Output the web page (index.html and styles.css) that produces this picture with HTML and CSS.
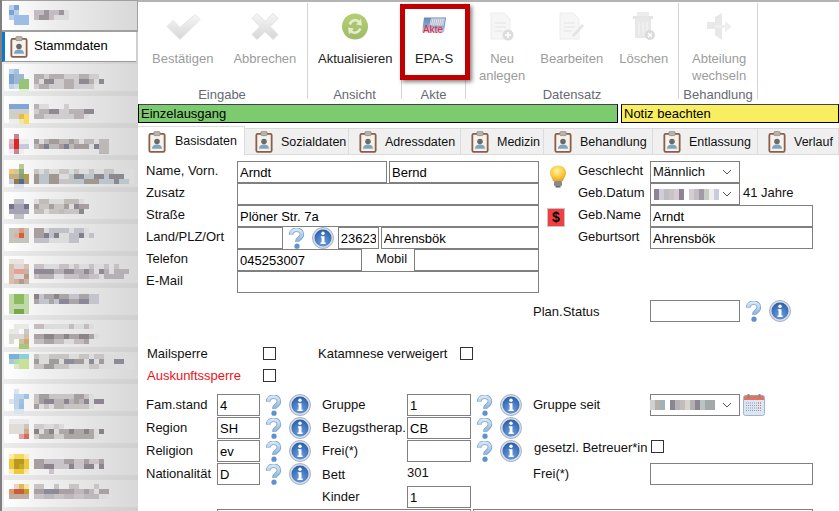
FILE: index.html
```html
<!DOCTYPE html>
<html lang="de">
<head>
<meta charset="utf-8">
<title>Stammdaten</title>
<link rel="stylesheet" href="styles.css">
</head>
<body>
<svg class="defs" width="0" height="0">
  <defs>
    <linearGradient id="qg" x1="0" y1="0" x2="0" y2="1"><stop offset="0" stop-color="#d6e6f5"/><stop offset="1" stop-color="#8db3dc"/></linearGradient>
    <radialGradient id="ig" cx=".5" cy=".75" r=".8"><stop offset="0" stop-color="#6d9fe0"/><stop offset="1" stop-color="#235aa6"/></radialGradient>
    <radialGradient id="bg" cx=".45" cy=".35" r=".7"><stop offset="0" stop-color="#fff3a8"/><stop offset=".6" stop-color="#fbc93c"/><stop offset="1" stop-color="#e99a1c"/></radialGradient>
    <linearGradient id="gray" x1="0" y1="0" x2="0" y2="1"><stop offset="0" stop-color="#f6f6f6"/><stop offset="1" stop-color="#d6d6d6"/></linearGradient>
    <linearGradient id="gr" x1="0" y1="0" x2="0" y2="1"><stop offset="0" stop-color="#b4cf72"/><stop offset="1" stop-color="#a0bb68"/></linearGradient>
    <linearGradient id="epa" x1="0" y1="0" x2="0" y2="1"><stop offset="0" stop-color="#6488bc"/><stop offset=".6" stop-color="#8aa6cc"/><stop offset="1" stop-color="#c8d4e6"/></linearGradient>
    <symbol id="clip" viewBox="0 0 20 24">
      <rect x="1.5" y="3.5" width="17" height="20" rx="1.5" fill="#f6f3ee" stroke="#8c5f48" stroke-width="2"/>
      <rect x="6.5" y="1" width="7" height="4.5" rx="1" fill="#b9b3aa" stroke="#8f8a82" stroke-width=".8"/>
      <circle cx="10" cy="12" r="3.1" fill="#6a6a66"/>
      <path d="M4.5 20c0-3.5 2.5-4.6 5.5-4.6s5.5 1.1 5.5 4.6z" fill="#7ea4c0"/>
    </symbol>
    <symbol id="q" viewBox="0 0 17 21">
      <path d="M3.2 6.8C3.2 3.2 5.8 1.8 8.6 1.8c3.1 0 5.3 1.900 5.300 4.500 0 2.400-1.700 3.500-3 4.500-1.100.9-1.700 1.500-1.700 3" fill="none" stroke="#7aa3d0" stroke-width="4.6"/>
      <path d="M3.2 6.8C3.2 3.2 5.8 1.8 8.6 1.8c3.1 0 5.3 1.900 5.300 4.500 0 2.400-1.700 3.500-3 4.500-1.100.9-1.700 1.500-1.700 3" fill="none" stroke="url(#qg)" stroke-width="3"/>
      <circle cx="9" cy="18.2" r="2.6" fill="#5f92cc"/>
    </symbol>
    <symbol id="i" viewBox="0 0 22 22">
      <circle cx="11" cy="11" r="10.5" fill="#d7dde6" stroke="#a9b2c0"/>
      <circle cx="11" cy="11" r="8.5" fill="url(#ig)"/>
      <circle cx="11" cy="6.3" r="1.7" fill="#fff"/>
      <path d="M8.8 9.2h3.700v6.400h1.200v1.400H8.500v-1.400h1.100v-5H8.800z" fill="#fff"/>
    </symbol>
  </defs>
</svg>
<div class="app">
  <aside class="side">
    <div class="nav nav-top">
      <svg class="mos" width="130" height="30"><g transform="translate(0,4) scale(5)" fill="none" shape-rendering="crispEdges">
        <path stroke="#dcdcdc" d="M6 1.5h7M6 2.500h7"/>
        <path stroke="#b9cfe8" d="M1 .5h1M2 1.500h1M1 2.500h1"/><path stroke="#7aa3d6" d="M2 .5h1M1 1.500h1"/><path stroke="#9cbde6" d="M2 2.500h3M2 3.500h3"/>
        <path stroke="#c4bcc0" d="M6 1.500h2m1 0h2M6 2.500h1m2 0h1"/><path stroke="#9a969a" d="M8 1.500h1M11 1.500h1M7 2.500h2"/>
      </g></svg>
    </div>
    <div class="nav nav-active">
      <svg class="clip-lg" width="18" height="23"><use href="#clip"/></svg>
      <span>Stammdaten</span>
    </div>
    <div class="nav">
      <svg class="mos" width="130" height="30"><g transform="translate(0,5) scale(5)" fill="none" shape-rendering="crispEdges">
        <path stroke="#dddcdc" d="M6 1.500h13M6 2.500h14M6 3.500h12"/>
        <path stroke="#bcd0e8" d="M1 .5h1M1 3.500h1"/><path stroke="#a0c0e8" d="M2 .5h1"/><path stroke="#80a4cc" d="M1 1.500h1M1 2.500h1"/><path stroke="#9cb8d4" d="M2 1.500h2M2 2.500h1"/><path stroke="#98c478" d="M3 2.500h2M3 3.500h2"/><path stroke="#e2eeda" d="M3 4.500h2"/><path stroke="#d0dce6" d="M2 3.500h1"/>
        <path stroke="#b4aeae" d="M6 1.500h2m1 0h3m3 0h2M6 2.500h1m5 0h2m3 0h1M7 3.500h2m3 0h2"/><path stroke="#8f8a92" d="M8 2.500h2m5 0h2m2 0h1"/><path stroke="#cfcdcd" d="M8 1.500h1m3 0h3m2 0h2M10 2.500h2m2 0h1M6 3.500h1m2 0h3m2 0h4"/>
      </g></svg>
    </div>
    <div class="nav">
      <svg class="mos" width="130" height="30"><g transform="translate(0,8) scale(5)" fill="none" shape-rendering="crispEdges">
        <path stroke="#dddcdc" d="M6 .5h3M6 1.500h11M6 2.500h11"/>
        <path stroke="#7ea6d8" d="M1 .5h4"/><path stroke="#cfcfca" d="M1 1.500h4M1 2.500h2"/><path stroke="#e3bc50" d="M3 2.500h1"/><path stroke="#fad864" d="M4 2.500h1M4 3.500h1"/><path stroke="#f4e6a8" d="M3 3.500h1"/><path stroke="#eeeeea" d="M1 3.500h2"/>
        <path stroke="#b8b2b4" d="M6 .5h1M7 1.500h2m4 0h3M6 2.500h2m6 0h2"/><path stroke="#8f8a92" d="M9 1.500h2m5 0h2"/><path stroke="#cfcdcd" d="M6 1.500h1m4 0h2M8 2.500h6M12 .5h1"/>
      </g></svg>
    </div>
    <div class="nav">
      <svg class="mos" width="130" height="30"><g transform="translate(0,6) scale(5)" fill="none" shape-rendering="crispEdges">
        <path stroke="#dddcdc" d="M6 1.500h15M6 2.500h15"/>
        <path stroke="#e2b8c0" d="M1 1.500h1"/><path stroke="#c88490" d="M2 .5h1M2 3.500h1"/><path stroke="#d8282c" d="M2 1.500h1M2 2.500h1"/><path stroke="#d8a8b4" d="M1 2.500h1"/><path stroke="#c8c8dc" d="M3 2.500h2"/><path stroke="#eeeeee" d="M3 1.500h2M1 3.500h1M3 3.500h1"/>
        <path stroke="#a49c9c" d="M6 1.500h1m2 0h2m2 0h1m2 0h1m2 0h1M7 2.500h1m3 0h1m2 0h3"/><path stroke="#80808c" d="M8 2.500h1m3 0h1m5 0h1"/><path stroke="#bdb8b8" d="M8 1.500h1m2 0h2m1 0h1m1 0h2m1 0h2M6 2.500h1m2 0h2m2 0h1m5 0h2M19 3.500h2"/>
      </g></svg>
    </div>
    <div class="nav">
      <svg class="mos" width="130" height="30"><g transform="translate(0,4) scale(5)" fill="none" shape-rendering="crispEdges">
        <path stroke="#dddcdc" d="M6 1.500h20M6 2.500h20M6 3.500h20"/>
        <path stroke="#b4cc94" d="M3 .5h1"/><path stroke="#f0c878" d="M1 1.500h1"/><path stroke="#d8c498" d="M2 1.500h1"/><path stroke="#8cb078" d="M3 1.500h1"/><path stroke="#c4b080" d="M1 2.500h2"/><path stroke="#b89c48" d="M4 2.500h1"/><path stroke="#8c9c78" d="M3 2.500h1"/><path stroke="#c4d0e0" d="M1 3.500h1"/><path stroke="#987848" d="M2 3.500h1"/><path stroke="#4c6c90" d="M3 3.500h1"/><path stroke="#b09870" d="M4 3.500h1"/><path stroke="#d8e0ec" d="M2 4.500h2"/>
        <path stroke="#c8c4c4" d="M6 1.500h1m1 0h1m2 0h2m1 0h1m2 0h1m2 0h2M11 3.500h3"/><path stroke="#a09890" d="M6 2.500h1m2 0h2M6 3.500h1m2 0h2m5 0h3"/><path stroke="#8c8890" d="M14 2.500h2m2 0h2m1 0h3M22 3.500h1"/><path stroke="#bcc4cc" d="M7 2.500h2m4 0h1m2 0h2m2 0h1M7 3.500h2m5 0h2m3 0h3M23 3.500h2"/>
      </g></svg>
    </div>
    <div class="nav">
      <svg class="mos" width="130" height="30"><g transform="translate(0,7) scale(5)" fill="none" shape-rendering="crispEdges">
        <path stroke="#dddcdc" d="M6 .5h10M6 1.500h11M6 2.500h10"/>
        <path stroke="#c0c0c8" d="M2 .5h2M2 3.500h2"/><path stroke="#74748c" d="M1 1.500h1M4 1.500h1"/><path stroke="#a4a4b4" d="M2 1.500h2M1 2.500h4"/>
        <path stroke="#c0bcb8" d="M7 .5h2m3 0h3M6 2.500h2m3 0h1"/><path stroke="#a8a0a0" d="M6 1.500h1m2 0h1m2 0h1m2 0h2"/><path stroke="#8c8890" d="M14 1.500h1M15 2.500h1"/><path stroke="#c8c4c4" d="M7 1.500h2m1 0h2M9 2.500h2m1 0h3"/>
      </g></svg>
    </div>
    <div class="nav">
      <svg class="mos" width="130" height="30"><g transform="translate(0,4) scale(5)" fill="none" shape-rendering="crispEdges">
        <path stroke="#dddcdc" d="M6 .5h11M6 1.500h11M6 2.500h9"/>
        <path stroke="#c4c4bc" d="M1 .5h4M1 1.500h1M4 1.500h1M1 2.500h4"/><path stroke="#d8b0a0" d="M2 1.500h1"/><path stroke="#d86038" d="M3 1.500h1"/><path stroke="#e09880" d="M3 .5h1"/>
        <path stroke="#a89ea0" d="M6 .5h2M6 1.500h2m5 0h1m3 0h1"/><path stroke="#80808a" d="M8 1.500h1m1 0h1M15 1.500h1"/><path stroke="#c0c0c8" d="M9 .5h4m1 0h2M9 1.500h1m3 0h2m2 0h1M13 2.500h2M6 2.500h3"/>
      </g></svg>
    </div>
    <div class="nav">
      <svg class="mos" width="130" height="30"><g transform="translate(0,3) scale(5)" fill="none" shape-rendering="crispEdges">
        <path stroke="#dddcdc" d="M6 1.500h14M6 2.500h19M6 3.500h19"/>
        <path stroke="#e8e4e0" d="M1 .5h3"/><path stroke="#d8c0b0" d="M1 1.500h1M4 1.500h1M1 2.500h1M1 3.500h1M1 4.500h1"/><path stroke="#e4a090" d="M2 2.500h2"/><path stroke="#b89888" d="M4 3.500h1M3 4.500h1"/><path stroke="#e0d8d4" d="M2 3.500h2M2 1.500h2"/><path stroke="#c8b4a4" d="M2 4.500h1M4 2.500h1M4 4.500h1"/>
        <path stroke="#c8c0c4" d="M6 1.500h2m3 0h2m1 0h1m2 0h1m2 0h1m1 0h1M6 3.500h1m5 0h3m2 0h2"/><path stroke="#908a94" d="M6 2.500h4m2 0h2m2 0h1m2 0h2m1 0h1"/><path stroke="#b4b0b4" d="M10 2.500h2m2 0h2m1 0h1m2 0h1m1 0h3M7 3.500h3m5 0h2m3 0h4"/>
      </g></svg>
    </div>
    <div class="nav">
      <svg class="mos" width="130" height="30"><g transform="translate(0,6) scale(5)" fill="none" shape-rendering="crispEdges">
        <path stroke="#dddcdc" d="M6 .5h11M6 1.500h11"/>
        <path stroke="#c0d8a8" d="M1 .5h1M4 .5h1M1 1.500h1M4 1.500h1M1 2.500h4M1 3.500h1M4 3.500h1"/><path stroke="#8cbc60" d="M2 .5h2M2 1.500h2"/><path stroke="#78a848" d="M2 3.500h2"/>
        <path stroke="#8c8484" d="M6 .5h1m3 0h1"/><path stroke="#a8a4a8" d="M8 .5h2m1 0h2m2 0h2M6 1.500h1m2 0h1m3 0h2m2 0h1"/><path stroke="#8a8898" d="M11 1.500h2M15 1.500h2"/><path stroke="#c4c4cc" d="M7 .5h1m5 0h2m2 0h2M7 1.500h2m1 0h1m6 0h2"/>
      </g></svg>
    </div>
    <div class="nav">
      <svg class="mos" width="130" height="30"><g transform="translate(0,4) scale(5)" fill="none" shape-rendering="crispEdges">
        <path stroke="#dddcdc" d="M6 .5h12M6 2.500h13M6 3.500h11"/>
        <path stroke="#e8e8e4" d="M2 .5h3M1 1.500h2"/><path stroke="#c8c8c4" d="M4 1.500h1"/><path stroke="#dcdad6" d="M1 2.500h3M1 3.500h1"/><path stroke="#d0c0a8" d="M3 3.500h2M4 2.500h1"/><path stroke="#cfa878" d="M4 3.500h1"/><path stroke="#a8c878" d="M3 4.500h2"/>
        <path stroke="#c4bcc0" d="M6 .5h2M13 .5h1M16 .5h1M6 3.500h2m2 0h2m2 0h2"/><path stroke="#8c8488" d="M8 2.500h2m2 0h1m2 0h2"/><path stroke="#a8a4a4" d="M6 2.500h2m2 0h2m1 0h2m2 0h1M8 3.500h2m6 0h1"/>
      </g></svg>
    </div>
    <div class="nav">
      <svg class="mos" width="130" height="30"><g transform="translate(0,2) scale(5)" fill="none" shape-rendering="crispEdges">
        <path stroke="#dddcdc" d="M6 .5h19M6 1.500h20M6 2.500h20"/>
        <path stroke="#7cb0dc" d="M1 .5h2"/><path stroke="#8cd0e0" d="M3 .5h2"/><path stroke="#a8c8d8" d="M1 1.500h1"/><path stroke="#b0dca8" d="M2 1.500h1"/><path stroke="#c8e098" d="M3 1.500h2M3 2.500h2"/><path stroke="#d8e8c8" d="M2 2.500h1"/>
        <path stroke="#c8c4c4" d="M6 .5h1m2 0h4m2 0h2m1 0h2M6 2.500h2m2 0h3m4 0h2"/><path stroke="#a09c9c" d="M6 1.500h1m2 0h2m3 0h2m3 0h1m2 0h2M8 2.500h2"/><path stroke="#8c8c98" d="M12 1.500h2m3 0h1m4 0h2"/>
      </g></svg>
    </div>
    <div class="nav">
      <svg class="mos" width="130" height="30"><g transform="translate(0,5) scale(5)" fill="none" shape-rendering="crispEdges">
        <path stroke="#dddcdc" d="M6 1.500h12M6 2.500h14M6 3.500h12"/>
        <path stroke="#d8e4f0" d="M2 .5h1M1 2.500h1M2 4.500h2"/><path stroke="#bcd4ec" d="M2 1.500h2M2 2.500h1"/><path stroke="#a0c0e4" d="M4 1.500h1M3 2.500h1"/><path stroke="#c0d4e8" d="M2 3.500h1"/><path stroke="#9cbce0" d="M3 3.500h1"/>
        <path stroke="#c8c4c4" d="M6 1.500h1m2 0h5m2 0h1M6 2.500h1M8 3.500h1m3 0h5"/><path stroke="#a49ea0" d="M7 1.500h2m5 0h2M14 2.500h1M7 2.500h1M6 3.500h1"/><path stroke="#8c8490" d="M8 2.500h2m2 0h1m3 0h1m1 0h2"/><path stroke="#b8b4b4" d="M10 2.500h2m1 0h1m1 0h1M10 3.500h2"/>
      </g></svg>
    </div>
    <div class="nav">
      <svg class="mos" width="130" height="30"><g transform="translate(0,3) scale(5)" fill="none" shape-rendering="crispEdges">
        <path stroke="#dddcdc" d="M6 1.500h6M6 2.500h14M6 3.500h13"/>
        <path stroke="#eceae8" d="M1 .5h4"/><path stroke="#e0dcd8" d="M1 1.500h3M1 2.500h3"/><path stroke="#c8c4c0" d="M4 1.500h1"/><path stroke="#ceaa88" d="M4 2.500h1"/><path stroke="#e0a0a0" d="M3 3.500h1"/><path stroke="#d86860" d="M4 3.500h1"/>
        <path stroke="#cfcccc" d="M6 1.500h2m2 0h1M6 3.500h1m3 0h2"/><path stroke="#8c8484" d="M6 2.500h1m2 0h1m3 0h1m2 0h1m2 0h1"/><path stroke="#aca8a8" d="M8 2.500h1m2 0h2m1 0h2m1 0h1M7 3.500h3M12 3.500h6"/>
      </g></svg>
    </div>
    <div class="nav">
      <svg class="mos" width="130" height="30"><g transform="translate(0,6) scale(5)" fill="none" shape-rendering="crispEdges">
        <path stroke="#dddcdc" d="M6 1.500h14M6 2.500h14"/>
        <path stroke="#faeca8" d="M1 .5h1M4 .5h1M1 3.500h1M4 3.500h1"/><path stroke="#f4d860" d="M2 .5h2"/><path stroke="#ecc83c" d="M1 1.500h1M4 1.500h1M1 2.500h1M4 2.500h1M2 3.500h2"/><path stroke="#b89820" d="M2 1.500h2M2 2.500h1"/><path stroke="#c8a828" d="M3 2.500h1"/>
        <path stroke="#a8a0a0" d="M6 1.500h2m4 0h2m2 0h1m2 0h1M6 2.500h2"/><path stroke="#8c848c" d="M8 2.500h2m3 0h1m2 0h2m1 0h1"/><path stroke="#c8c4c8" d="M8 1.500h4m2 0h2m1 0h2M10 2.500h3m1 0h2M9 3.500h1"/>
      </g></svg>
    </div>
    <div class="nav">
      <svg class="mos" width="130" height="30"><g transform="translate(0,4) scale(5)" fill="none" shape-rendering="crispEdges">
        <path stroke="#dddcdc" d="M6 1.500h15M6 2.500h15"/>
        <path stroke="#f0d0c0" d="M2 .5h1"/><path stroke="#e0b860" d="M3 .5h1"/><path stroke="#f4e8a0" d="M4 .5h1"/><path stroke="#e09868" d="M1 1.500h1"/><path stroke="#c0603c" d="M2 1.500h2"/><path stroke="#c89c20" d="M4 1.500h1"/><path stroke="#c0aca4" d="M1 2.500h4"/>
        <path stroke="#c8c4c4" d="M6 .5h2m2 0h1m2 0h2m3 0h1M6 2.500h2m2 0h2m2 0h2"/><path stroke="#8c8c98" d="M8 1.500h3"/><path stroke="#a8a0a4" d="M6 1.500h2m3 0h3m2 0h1m2 0h2"/><path stroke="#bcb8bc" d="M14 1.500h2m1 0h1M8 2.500h2m2 0h2m2 0h3"/>
      </g></svg>
    </div>
  </aside>

  <main class="main">
    <div class="ribbon">
      <section class="group g-eingabe">
        <div class="btns">
          <div class="btn off">
            <svg class="ic" width="36" height="30" viewBox="0 0 36 30"><path d="M2 15l6-6 7 7L30 3l5 5-20 20z" fill="url(#gray)" stroke="#e4e4e4"/></svg>
            <span>Bestätigen</span>
          </div>
          <div class="btn off">
            <svg class="ic" width="30" height="30" viewBox="0 0 30 30"><path d="M7 2l8 8 8-8 5 5-8 8 8 8-5 5-8-8-8 8-5-5 8-8-8-8z" fill="url(#gray)" stroke="#e0e0e0"/></svg>
            <span>Abbrechen</span>
          </div>
        </div>
        <h2>Eingabe</h2>
      </section>
      <section class="group g-ansicht">
        <div class="btns">
          <div class="btn">
            <svg class="ic" width="28" height="28" viewBox="0 0 28 28"><circle cx="14" cy="14" r="13" fill="url(#gr)"/><path d="M20 6l1 7-6-1 2-2c-3-2-6-.5-7 2.500l-2.500-1C9 7 14 5 18.500 8zM8 22l-1-7 6 1-2 2c3 2 6 .5 7-2.500l2.500 1C19 21 14 23 9.500 20z" fill="#e4edcf"/></svg>
            <span>Aktualisieren</span>
          </div>
        </div>
        <h2>Ansicht</h2>
      </section>
      <section class="group g-akte">
        <div class="btns">
          <div class="btn">
            <svg class="ic" width="24" height="18" viewBox="0 0 24 18"><path d="M2 0h22l-2 15H0z" fill="url(#epa)"/><path d="M9 1h14l-1.500 7H7.500z" fill="#e4e8ef"/><path d="M10 1L8.500 8M12 1l-1.500 7M14 1l-1.500 7M16 1l-1.500 7M18 1l-1.500 7M20 1l-1.500 7M22 1l-1.500 7" stroke="#a4aebe" stroke-width=".8"/><text class="akte" x="1" y="15">Akte</text></svg>
            <span>EPA-S</span>
          </div>
        </div>
        <h2>Akte</h2>
        <div class="mark"></div>
      </section>
      <section class="group g-daten">
        <div class="btns">
          <div class="btn off">
            <svg class="ic" width="24" height="29" viewBox="0 0 24 29"><path d="M1 1h13l6 6v20H1z" fill="#f6f6f6" stroke="#ececec"/><path d="M5 11h11M5 15h11M5 19h8" stroke="#e4e4e4"/><circle cx="18" cy="23" r="5.5" fill="#dcdcdc"/><path d="M18 20v6M15 23h6" stroke="#fff" stroke-width="1.5"/></svg>
            <span>Neu<br>anlegen</span>
          </div>
          <div class="btn off">
            <svg class="ic" width="26" height="29" viewBox="0 0 26 29"><path d="M1 1h13l6 6v20H1z" fill="#f6f6f6" stroke="#ececec"/><path d="M5 11h11M5 15h11M5 19h8" stroke="#e4e4e4"/><path d="M23 12l2 2-9 10-3 1 1-3z" fill="#e4e4e4"/></svg>
            <span>Bearbeiten</span>
          </div>
          <div class="btn off">
            <svg class="ic" width="24" height="29" viewBox="0 0 24 29"><rect x="5" y="0" width="12" height="4" fill="#ececec"/><rect x="1" y="4" width="20" height="3" fill="#e6e6e6"/><path d="M3 7h16v19H3z" fill="#e8e8e8"/><path d="M7 10v13M11 10v13M15 10v13" stroke="#f6f6f6"/><circle cx="18" cy="23" r="5" fill="#dadada"/><path d="M16 21l4 4m0-4l-4 4" stroke="#fff" stroke-width="1.3"/></svg>
            <span>Löschen</span>
          </div>
        </div>
        <h2>Datensatz</h2>
      </section>
      <section class="group g-abt">
        <div class="btns">
          <div class="btn off">
            <svg class="ic" width="28" height="29" viewBox="0 0 28 29"><path d="M2 10h8V5l7-4v27l-7-5v-6H2z" fill="#e8e8e8"/><path d="M10 13h10V9l7 5.500-7 5.500v-4H10z" fill="#efefef"/></svg>
            <span>Abteilung<br>wechseln</span>
          </div>
        </div>
        <h2>Behandlung</h2>
      </section>
    </div>

    <div class="status">
      <div class="st st-green">Einzelausgang</div>
      <div class="st st-yellow">Notiz beachten</div>
    </div>

    <div class="tabs">
      <div class="tab active t1"><svg width="18" height="23"><use href="#clip"/></svg><span>Basisdaten</span></div>
      <div class="tab t2"><svg width="18" height="23"><use href="#clip"/></svg><span>Sozialdaten</span></div>
      <div class="tab t3"><svg width="18" height="23"><use href="#clip"/></svg><span>Adressdaten</span></div>
      <div class="tab t4"><svg width="18" height="23"><use href="#clip"/></svg><span>Medizin</span></div>
      <div class="tab t5"><svg width="18" height="23"><use href="#clip"/></svg><span>Behandlung</span></div>
      <div class="tab t6"><svg width="18" height="23"><use href="#clip"/></svg><span>Entlassung</span></div>
      <div class="tab t7"><svg width="18" height="23"><use href="#clip"/></svg><span>Verlauf</span></div>
    </div>

    <form class="form">
      <div class="top">
        <div class="left">
          <div class="row"><label>Name, Vorn.</label><input class="w150" value="Arndt"><input class="w150" value="Bernd"></div>
          <div class="row"><label>Zusatz</label><input class="w302"></div>
          <div class="row"><label>Straße</label><input class="w302" value="Plöner Str. 7a"></div>
          <div class="row"><label>Land/PLZ/Ort</label><input class="w46"><svg class="q" width="17" height="21"><use href="#q"/></svg><svg class="i" width="22" height="22"><use href="#i"/></svg><input class="w41" value="23623"><input class="w159" value="Ahrensbök"></div>
          <div class="row"><label>Telefon</label><input class="w125" value="045253007"><span class="mobil">Mobil</span><input class="w125" value=""></div>
          <div class="row"><label>E-Mail</label><input class="w302"></div>
        </div>
        <div class="mid">
          <svg class="bulb" width="18" height="23" viewBox="0 0 18 23"><path d="M9 .5c4.500 0 8 3.200 8 7.300 0 3.300-2.300 4.800-3 8.200H4C3.300 12.600 1 11.100 1 7.800 1 3.700 4.500.5 9 .5z" fill="url(#bg)"/><rect x="5" y="16" width="8" height="5" rx="1" fill="#8a8a8a"/><rect x="6.500" y="21" width="5" height="1.500" fill="#666"/></svg>
          <div class="dollar">$</div>
        </div>
        <div class="right">
          <div class="row"><label class="rl">Geschlecht</label><div class="sel"><span>Männlich</span><svg width="10" height="6" viewBox="0 0 10 6"><path d="M1 1l4 4 4-4" fill="none" stroke="#555"/></svg></div></div>
          <div class="row"><label class="rl">Geb.Datum</label><div class="sel">
            <svg class="blur" width="65" height="11"><g transform="scale(5,5.5)" fill="none" stroke-width="2" shape-rendering="crispEdges"><path stroke="#8f8494" d="M0 1h1M5 1h1"/><path stroke="#cfcfdc" d="M1 1h1"/><path stroke="#c0bcc0" d="M2 1h1"/><path stroke="#c8c4c4" d="M3 1h1"/><path stroke="#d4ccd0" d="M4 1h1M7 1h1"/><path stroke="#c4bcc4" d="M8 1h1"/><path stroke="#a09aa4" d="M9 1h1"/><path stroke="#c8ccc8" d="M10 1h1"/><path stroke="#f0f0e8" d="M11 1h1"/><path stroke="#c8cce0" d="M12 1h1"/></g></svg>
            <svg width="10" height="6" viewBox="0 0 10 6"><path d="M1 1l4 4 4-4" fill="none" stroke="#555"/></svg></div><span class="age">41 Jahre</span></div>
          <div class="row"><label class="rl">Geb.Name</label><input class="w163" value="Arndt"></div>
          <div class="row"><label class="rl">Geburtsort</label><input class="w163" value="Ahrensbök"></div>
        </div>
      </div>

      <div class="plan">
        <label>Plan.Status</label><input class="w90"><svg class="q" width="17" height="21"><use href="#q"/></svg><svg class="i" width="22" height="22"><use href="#i"/></svg>
      </div>

      <div class="flags">
        <div class="flag"><label>Mailsperre</label><span class="cb"></span><label class="kat">Katamnese verweigert</label><span class="cb"></span></div>
        <div class="flag"><label class="red">Auskunftssperre</label><span class="cb"></span></div>
      </div>

      <div class="grid">
        <label>Fam.stand</label><input value="4"><svg class="q" width="17" height="21"><use href="#q"/></svg><svg width="22" height="22"><use href="#i"/></svg>
        <label>Gruppe</label><input value="1"><svg class="q" width="17" height="21"><use href="#q"/></svg><svg width="22" height="22"><use href="#i"/></svg>
        <label>Gruppe seit</label>
        <div class="datewrap"><div class="sel">
          <svg class="blur" width="70" height="10"><g transform="scale(5)" fill="none" stroke-width="2" shape-rendering="crispEdges"><path stroke="#d0d0d0" d="M0 1h1"/><path stroke="#b8b0ac" d="M1 1h1"/><path stroke="#a4b0b8" d="M2 1h1"/><path stroke="#8c8490" d="M4 1h1M9 1h1"/><path stroke="#b4b4b8" d="M5 1h1"/><path stroke="#c4bcb8" d="M6 1h1"/><path stroke="#d8d4d0" d="M7 1h1"/><path stroke="#b4b0b0" d="M8 1h1"/><path stroke="#b8c4c0" d="M10 1h1"/><path stroke="#a4a8a8" d="M11 1h2"/></g></svg>
          <svg width="10" height="6" viewBox="0 0 10 6"><path d="M1 1l4 4 4-4" fill="none" stroke="#555"/></svg></div>
          <svg class="cal" width="22" height="22" viewBox="0 0 22 22"><rect x=".5" y="1.500" width="21" height="20" rx="2" fill="#dce6f2" stroke="#9fb4cf"/><path d="M1 3.500a2 2 0 0 1 2-2h16a2 2 0 0 1 2 2V6H1z" fill="#df7462"/><rect x="4.500" y="0" width="2" height="4" fill="#8a8a8a"/><rect x="15.500" y="0" width="2" height="4" fill="#8a8a8a"/><path d="M3 9h16M3 11.500h16M3 14h16M3 16.500h16" stroke="#8f9cb8" stroke-dasharray="1 1"/><path d="M15 9h4M15 11.500h4M15 14h4" stroke="#e0685c" stroke-dasharray="1 1"/></svg>
        </div>

        <label>Region</label><input value="SH"><svg class="q" width="17" height="21"><use href="#q"/></svg><svg width="22" height="22"><use href="#i"/></svg>
        <label>Bezugstherap.</label><input value="CB"><svg class="q" width="17" height="21"><use href="#q"/></svg><svg width="22" height="22"><use href="#i"/></svg>
        <span></span><span></span>

        <label>Religion</label><input value="ev"><svg class="q" width="17" height="21"><use href="#q"/></svg><svg width="22" height="22"><use href="#i"/></svg>
        <label>Frei(*)</label><input><svg class="q" width="17" height="21"><use href="#q"/></svg><svg width="22" height="22"><use href="#i"/></svg>
        <label class="gesetzl">gesetzl. Betreuer*in</label><span class="cb cb-g"></span>

        <label>Nationalität</label><input value="D"><svg class="q" width="17" height="21"><use href="#q"/></svg><svg width="22" height="22"><use href="#i"/></svg>
        <label class="low">Bett</label><span class="val">301</span><span></span><span></span>
        <label>Frei(*)</label><input>

        <span></span><span></span><span></span><span></span>
        <label>Kinder</label><input value="1">
      </div>
      <div class="last"><input class="lw1"><input class="lw2"></div>
    </form>
  </main>
</div>
</body>
</html>
```
FILE: styles.css
```css
html, body { margin: 0; padding: 0; }
body { width: 839px; height: 511px; overflow: hidden; background: #fff; font: 13px/16px "Liberation Sans", Arial, sans-serif; color: #111; }
.defs { position: absolute; }
.app { display: flex; height: 511px; overflow: hidden; }

/* sidebar */
.side { width: 136px; flex: none; border-left: 2px solid #808080; background: linear-gradient(90deg, #ececec, #dcdcdc 50%, #cfcfcf); height: 511px; overflow: hidden; }
.nav { height: 27px; margin: 0 0 5px 2px; background: linear-gradient(90deg, #fff, #f0f0f0 30%, #d8d8d8); }
.mos { display: block; overflow: visible; }
.nav-top { box-sizing: content-box; height: 29px; margin: 0 0 0 -1px; border: 1px solid #a0a0a0; border-bottom-width: 2px; }
.nav-top .mos { margin-left: 2px; }
.nav-active { box-sizing: content-box; width: 126px; height: 28px; margin: 0 0 2px; padding: 0 0 1px 5px; background: #fff; display: flex; align-items: center; gap: 6px; border-left: 3px solid #0a78d2; border-bottom: 1px solid #999; color: #000; }
.clip-lg { flex: none; }

/* ribbon */
.main { flex: 1; min-width: 0; }
.ribbon { display: flex; height: 101px; padding-top: 1px; border-top: 2px solid #b4b4b4; }
.group { position: relative; box-sizing: border-box; height: 96px; border-right: 1px solid #d4d4d4; text-align: center; flex: none; }
.group h2 { margin: 0; font: inherit; color: #666a72; line-height: 16px; }
.btns { display: flex; height: 84px; }
.btn { display: flex; flex-direction: column; align-items: center; color: #222; }
.btn .ic { height: 47px; flex: none; }
.btn span { white-space: nowrap; line-height: 17px; }
.btn.off span { color: #9c9c9c; }
.g-eingabe { width: 170px; }
.g-eingabe .btns { padding-left: 14px; gap: 20px; }
.g-eingabe h2 { margin-left: -1px; }
.g-ansicht { width: 94px; }
.g-ansicht .btns { padding-left: 10px; }
.g-akte { width: 64px; }
.g-akte .btns { padding-left: 13px; }
.g-daten { width: 213px; }
.g-daten .btns { padding-left: 13px; gap: 15px; }
.g-daten .btn:last-child { margin-left: 1px; }
.g-abt { width: 79px; }
.g-abt .btns { padding-left: 13px; }
.akte { font: 10px "Liberation Sans", Arial, sans-serif; fill: #f02038; }
.mark { position: absolute; left: -2px; top: 1px; width: 60px; height: 66px; border: 5px solid #c00000; box-shadow: 2px 2px 4px rgba(0,0,0,.5); }

/* status */
.status { display: flex; gap: 3px; height: 19px; }
.st { box-sizing: border-box; border: 1px solid #000; border-top-color: #444; padding-left: 2px; line-height: 18px; color: #000; }
.st-green { width: 480px; background: #7dcb6f; }
.st-yellow { flex: 1; background: #f8ee60; }

/* tabs */
.tabs { display: flex; align-items: flex-end; height: 29px; margin-top: 3px; font-size: 12.5px; }
.tab { box-sizing: border-box; height: 27px; background: #f0f0f0; border: 1px solid #dcdcdc; border-left: 0; display: flex; align-items: center; padding-left: 10px; gap: 8px; white-space: nowrap; }
.tab.active { height: 29px; background: #fff; border-bottom: 0; gap: 9px; padding-left: 10px; }
.t1 { width: 107px; } .t2 { width: 104px; } .t3 { width: 112px; } .t4 { width: 83px; }
.t5 { width: 109px; } .t6 { width: 105px; } .t7 { width: 81px; }

/* form */
.form { padding: 6px 0 0 8px; }
input { box-sizing: border-box; display: block; width: 100%; min-width: 0; height: 22px; margin: 0; padding: 0 2px; border: 1px solid #808080; border-radius: 0; outline: 0; background: #fff; font: 13px "Liberation Sans", Arial, sans-serif; color: #000; }
label { white-space: nowrap; display: block; }
.top { display: flex; }
.left { width: 393px; flex: none; }
.row { display: flex; align-items: center; height: 22px; }
.row label { width: 91px; flex: none; margin-top: -2px; }
.w150 { width: 150px; }
.w150 + .w150 { margin-left: 2px; }
.w302 { width: 302px; }
.w46 { width: 46px; }
.w41 { width: 41px; }
.w159 { width: 159px; margin-left: 2px; }
.w125 { width: 125px; }
.mobil { width: 52px; padding-left: 14px; box-sizing: border-box; flex: none; margin-top: -2px; }
.q { flex: none; }
.row .q, .plan .q { margin-left: 5px; }
.row .i { flex: none; margin: 0 4px 0 7px; }
.plan .i { margin-left: 7px; }
.mid { width: 19px; margin-left: 8px; flex: none; }
.bulb { display: block; margin: 4px 0 0 2px; }
.dollar { box-sizing: border-box; width: 18px; height: 19px; margin-top: 20px; border: 1px solid #c4c4c4; background: #f24040; text-align: center; line-height: 17px; color: #000; font-size: 14px; font-weight: 700; }
.right { margin-left: 12px; }
.row .rl { width: 72px; }
.sel { box-sizing: border-box; width: 90px; height: 22px; flex: none; border: 1px solid #808080; display: flex; align-items: center; justify-content: space-between; padding: 0 7px 0 2px; color: #111; }
.w163 { width: 163px; }
.age { margin-left: 3px; margin-top: -2px; }
.blur { flex: none; margin-left: 1px; }
.plan { display: flex; align-items: center; height: 22px; margin-top: 7px; padding-left: 387px; }
.plan label { width: 117px; flex: none; margin-top: 2px; }
.plan .w90 { width: 90px; flex: none; }
.flags { margin-top: 21px; }
.flag { display: flex; align-items: center; height: 22px; padding-left: 1px; }
.flag label { width: 116px; flex: none; }
.flag .kat { width: 142px; margin-left: 42px; }
.red { color: #ee1020; }
.cb { box-sizing: border-box; display: block; width: 13px; height: 13px; border: 1px solid #333; background: #fff; flex: none; }
.flag .cb { margin-top: -1px; }
.grid { display: grid; grid-template-columns: 71px 43px 29px 33px 85px 64px 29px 33px 117px 163px; grid-auto-rows: 22px; row-gap: 1px; margin-top: 7px; align-items: center; }
.grid label { margin-top: -1px; }
.grid .q { margin-left: 5px; }
.grid .low { margin-top: 2px; }
.val { margin-top: -3px; }
.gesetzl { margin-left: 1px; }
.grid .gesetzl { margin-top: -7px; }
.cb-g { margin: -10px 0 0 1px; }
.datewrap { display: flex; align-items: center; gap: 3px; }
.datewrap .blur { margin-left: -3px; }
.cal { flex: none; }
.last { display: flex; margin: 1px 0 0 71px; gap: 2px; }
.lw1 { width: 254px; }
.lw2 { width: 340px; }
```
